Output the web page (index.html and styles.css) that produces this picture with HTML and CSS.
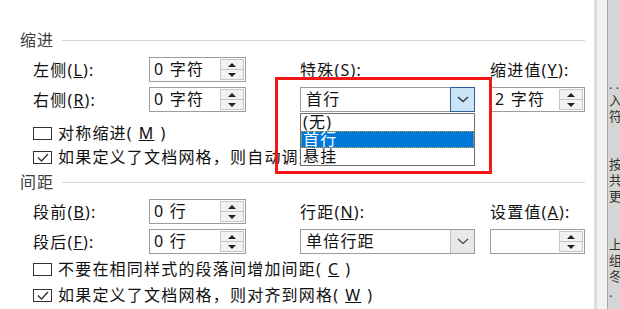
FILE: index.html
```html
<!DOCTYPE html>
<html lang="zh-CN">
<head>
    <meta charset="UTF-8">
    <title>段落</title>
    <link rel="stylesheet" href="styles.css">
</head>
<body>
    <div class="window">
        <div class="dialog">
            <div class="group-title">缩进</div>
            <div class="fields">
                <span class="label">左侧(<u>L</u>):</span>
                <div class="spinner">
                    <span class="value">0 字符</span>
                    <div class="spin"><span class="up"></span><span class="down"></span></div>
                </div>
                <span class="label col-special">特殊(<u>S</u>):</span>
                <span class="label col-amount">缩进值(<u>Y</u>):</span>

                <span class="label">右侧(<u>R</u>):</span>
                <div class="spinner">
                    <span class="value">0 字符</span>
                    <div class="spin"><span class="up"></span><span class="down"></span></div>
                </div>
                <div class="select col-special">
                    <span class="value">首行</span>
                    <span class="arrow focused">
                        <svg width="12" height="7" viewBox="0 0 12 7"><path d="M1 1 L6 5.5 L11 1" fill="none" stroke="#333" stroke-width="1.4"/></svg>
                    </span>
                    <ul class="options">
                        <li>(无)</li>
                        <li class="selected">首行</li>
                        <li>悬挂</li>
                    </ul>
                    <div class="highlight"></div>
                </div>
                <div class="spinner col-amount">
                    <span class="value">2 字符</span>
                    <div class="spin"><span class="up"></span><span class="down"></span></div>
                </div>
            </div>
            <div class="checks first">
                <div class="check"><span class="box"></span>对称缩进(<u>M</u>)</div>
                <div class="check"><span class="box checked"><svg width="12" height="9" viewBox="0 0 12 9"><path d="M1 4.5 L4.5 8 L11 1" fill="none" stroke="#333" stroke-width="1.4"/></svg></span>如果定义了文档网格，则自动调整右缩进(<u>D</u>)</div>
            </div>

            <div class="group-title spacing">间距</div>
            <div class="fields">
                <span class="label">段前(<u>B</u>):</span>
                <div class="spinner">
                    <span class="value">0 行</span>
                    <div class="spin"><span class="up"></span><span class="down"></span></div>
                </div>
                <span class="label col-special">行距(<u>N</u>):</span>
                <span class="label col-amount">设置值(<u>A</u>):</span>

                <span class="label">段后(<u>F</u>):</span>
                <div class="spinner">
                    <span class="value">0 行</span>
                    <div class="spin"><span class="up"></span><span class="down"></span></div>
                </div>
                <div class="select col-special">
                    <span class="value">单倍行距</span>
                    <span class="arrow">
                        <svg width="12" height="7" viewBox="0 0 12 7"><path d="M1 1 L6 5.5 L11 1" fill="none" stroke="#444" stroke-width="1.2"/></svg>
                    </span>
                </div>
                <div class="spinner col-amount">
                    <span class="value"></span>
                    <div class="spin"><span class="up"></span><span class="down"></span></div>
                </div>
            </div>
            <div class="checks second">
                <div class="check"><span class="box"></span>不要在相同样式的段落间增加间距(<u>C</u>)</div>
                <div class="check"><span class="box checked"><svg width="12" height="9" viewBox="0 0 12 9"><path d="M1 4.5 L4.5 8 L11 1" fill="none" stroke="#333" stroke-width="1.4"/></svg></span>如果定义了文档网格，则对齐到网格(<u>W</u>)</div>
            </div>
        </div>
        <div class="edge">
            <div class="frame"></div>
            <div class="gutter"></div>
            <div class="doc">
                <div>. .</div>
                <div>入</div>
                <div>符</div>
                <div>&nbsp;</div>
                <div>&nbsp;</div>
                <div>按</div>
                <div>共</div>
                <div>更</div>
                <div>&nbsp;</div>
                <div>&nbsp;</div>
                <div>上</div>
                <div>组</div>
                <div>冬</div>
                <div>.</div>
            </div>
        </div>
    </div>
</body>
</html>
```

FILE: styles.css
```css
body {
    margin: 0;
    background: #fff;
    font-family: "Noto Sans", "Noto Sans CJK SC", sans-serif;
    font-size: 16px;
    color: #111;
}
u {
    text-decoration: underline;
    text-decoration-thickness: 1px;
    text-underline-offset: 1px;
}
.window {
    display: flex;
    height: 309px;
    overflow: hidden;
}
.dialog {
    width: 594px;
    padding: 31px 9px 0 20px;
    box-sizing: border-box;
}
.group-title {
    display: flex;
    align-items: center;
    gap: 8px;
    height: 18px;
    line-height: 18px;
    letter-spacing: 1px;
    color: #3c3c3c;
}
.group-title::after {
    content: '';
    flex: 1;
    height: 1px;
    background: #d4d4d4;
}
.group-title.spacing {
    margin-top: 7px;
}
.fields {
    display: grid;
    grid-template-columns: 116px 97px 54px 175px 15px 95px;
    grid-auto-rows: 25px;
    row-gap: 5px;
    margin: 8px 0 0 13px;
}
.label {
    grid-column: 1;
    align-self: center;
    letter-spacing: 1.2px;
    line-height: 18px;
    white-space: nowrap;
}
.label.col-special, .select.col-special {
    grid-column: 4;
}
.label.col-amount, .spinner.col-amount {
    grid-column: 6;
}
.spinner {
    grid-column: 2;
    display: flex;
    border: 1px solid #9c9c9c;
    box-sizing: border-box;
    background: #fff;
}
.spinner .value, .select .value {
    flex: 1;
    padding-left: 4px;
    line-height: 23px;
    letter-spacing: 1.2px;
    white-space: nowrap;
}
.spin {
    width: 22px;
    margin: 1px;
    display: flex;
    flex-direction: column;
    border: 1px solid #c6c6c6;
    background: #f2f2f2;
}
.spin span {
    flex: 1;
    display: flex;
    align-items: center;
    justify-content: center;
}
.spin .up {
    border-bottom: 1px solid #c6c6c6;
}
.spin .up::after {
    content: '';
    border-left: 4px solid transparent;
    border-right: 4px solid transparent;
    border-bottom: 4px solid #222;
}
.spin .down::after {
    content: '';
    border-left: 4px solid transparent;
    border-right: 4px solid transparent;
    border-top: 4px solid #222;
}
.select {
    position: relative;
    display: flex;
    border: 1px solid #9c9c9c;
    box-sizing: border-box;
    background: #fff;
}
.select .value {
    padding-left: 5px;
}
.arrow {
    width: 23px;
    display: flex;
    align-items: center;
    justify-content: center;
    background: #e8e8e8;
    border-left: 1px solid #bdbdbd;
}
.arrow.focused {
    background: #cce4f7;
    border: 1px solid #2f5f9a;
    margin: -1px -1px -1px 0;
}
.options {
    position: absolute;
    top: 25px;
    left: -1px;
    width: 175px;
    height: 53px;
    margin: 0;
    padding: 0;
    list-style: none;
    background: #fff;
    border: 1px solid #6e6e6e;
    box-sizing: border-box;
    z-index: 2;
}
.options li {
    height: 17px;
    line-height: 16px;
    padding-left: 2px;
    letter-spacing: 1.2px;
}
.options li.selected {
    background: #0078d7;
    color: #fff;
    outline: 1px dotted #d9a04a;
    outline-offset: -1px;
}
.highlight {
    position: absolute;
    left: -26px;
    top: -11px;
    width: 217px;
    height: 97px;
    border: 3px solid #f21818;
    box-sizing: border-box;
    z-index: 3;
    pointer-events: none;
}
.checks {
    margin-left: 13px;
    display: flex;
    flex-direction: column;
    gap: 6px;
}
.checks.first {
    margin-top: 12px;
}
.checks.second {
    margin-top: 6px;
    gap: 8px;
}
.check {
    display: flex;
    align-items: center;
    gap: 6px;
    height: 18px;
    line-height: 18px;
    letter-spacing: 1.2px;
    white-space: nowrap;
}
.box {
    width: 19px;
    height: 13px;
    border: 1.5px solid #333;
    box-sizing: border-box;
    display: flex;
    align-items: center;
    justify-content: center;
}
.edge {
    width: 26px;
    display: flex;
}
.edge .frame {
    width: 3px;
    background: #dcdcdc;
}
.edge .gutter {
    width: 10px;
    background: #f1f1f1;
}
.edge .doc {
    flex: 1;
    border-left: 1px solid #a6a6a6;
    background: #d5d5d5;
    padding: 76px 0 0 1px;
    font-size: 13px;
    line-height: 16px;
    color: #333;
    overflow: hidden;
    white-space: nowrap;
}
```
